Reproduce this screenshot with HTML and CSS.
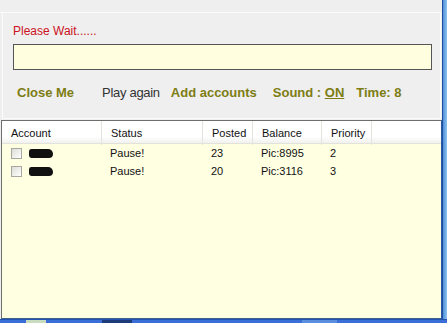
FILE: index.html
```html
<!DOCTYPE html>
<html lang="en">

<head>
  <meta charset="UTF-8">
  <title>Please Wait</title>
  <link rel="stylesheet" href="styles.css">
</head>

<body>
  <div id="screen">
    <div id="window">
      <div id="top-strip"></div>

      <div id="status-panel">
        <div id="wait-text">Please Wait......</div>
        <div id="wait-box"></div>
        <div id="actions">
          <span class="action olive close-me">Close Me</span>
          <span class="action play-again">Play again</span>
          <span class="action olive add-accounts">Add accounts</span>
          <span class="action olive sound">Sound : <u>ON</u></span>
          <span class="action olive time">Time: 8</span>
        </div>
      </div>

      <div id="accounts-list">
        <div class="list-row list-header">
          <div class="cell">Account</div>
          <div class="cell">Status</div>
          <div class="cell">Posted</div>
          <div class="cell">Balance</div>
          <div class="cell">Priority</div>
          <div class="cell"></div>
        </div>
        <div class="list-row">
          <div class="cell account-cell"><span class="check"></span><span class="scribble"></span></div>
          <div class="cell">Pause!</div>
          <div class="cell">23</div>
          <div class="cell">Pic:8995</div>
          <div class="cell">2</div>
        </div>
        <div class="list-row">
          <div class="cell account-cell"><span class="check"></span><span class="scribble"></span></div>
          <div class="cell">Pause!</div>
          <div class="cell">20</div>
          <div class="cell">Pic:3116</div>
          <div class="cell">3</div>
        </div>
      </div>
    </div>
    <div id="frame-right"></div>
  </div>
  <div id="taskbar">
    <span class="task task-light"></span>
    <span class="task task-dark"></span>
    <span class="task task-mid"></span>
  </div>
</body>

</html>
```

FILE: styles.css
```css
body {
  margin: 0;
  width: 447px;
  height: 323px;
  overflow: hidden;
  font-family: "Liberation Sans", Arial, sans-serif;
  background-color: #3a6fd8;
}

#screen {
  display: flex;
  height: 319px;
}

#window {
  width: 442px;
  display: flex;
  flex-direction: column;
  background-color: #efefef;
}

#frame-right {
  width: 5px;
  border-left: 1px solid #1f4f9e;
  background: linear-gradient(to right, #4f8fd8, #8fc2f0);
  box-sizing: border-box;
}

#top-strip {
  height: 12px;
  background-color: #efefef;
  border-bottom: 1px solid #fafafa;
}

/* top panel with the wait message */
#status-panel {
  margin-left: 2px;
  margin-right: 1px;
  border-left: 1px solid #fbfbfb;
  border-right: 1px solid #fbfbfb;
  border-bottom: 1px solid #fafafa;
  height: 106px;
  box-sizing: border-box;
  padding: 11px 0 0 10px;
  background-color: #efefef;
}

#wait-text {
  color: #cc1122;
  font-size: 12px;
  line-height: 14px;
}

#wait-box {
  margin-top: 6px;
  width: 419px;
  height: 26px;
  box-sizing: border-box;
  border: 1px solid #555555;
  background-color: #ffffe0;
}

#actions {
  display: flex;
  align-items: baseline;
  margin-top: 15px;
  font-size: 13px;
  line-height: 16px;
}

.olive {
  color: #7d7d14;
  font-weight: bold;
}

.close-me {
  margin-left: 4px;
}

.play-again {
  margin-left: 28px;
  color: #333333;
  letter-spacing: -0.3px;
}

.add-accounts {
  margin-left: 11px;
}

.sound {
  margin-left: 16px;
}

.time {
  margin-left: 12px;
}

/* list of accounts */
#accounts-list {
  flex: 1;
  margin: 1px 0 0 1px;
  border: 1px solid #6e6e6e;
  border-right-color: #2a5ba8;
  border-bottom-color: #3f5f8f;
  background-color: #ffffe2;
  font-size: 11px;
}

.list-row {
  display: grid;
  grid-template-columns: 100px 101px 50px 69px 50px 1fr;
  height: 18px;
  line-height: 18px;
}

.list-header {
  height: 22px;
  line-height: 24px;
  background: linear-gradient(#ffffff 70%, #f1f1ee);
  border-bottom: 1px solid #e2e2da;
  color: #222222;
}

.list-header .cell {
  padding-left: 9px;
  border-right: 1px solid #e4e4de;
}

.list-header .cell:last-child {
  border-right: none;
}

.cell {
  padding-left: 8px;
  white-space: nowrap;
  color: #111111;
}

.account-cell {
  display: flex;
  align-items: center;
  padding-left: 9px;
}

.check {
  width: 11px;
  height: 11px;
  border: 1px solid #a8a8a0;
  background: linear-gradient(135deg, #dcdcd6, #ffffff);
  box-sizing: border-box;
}

.scribble {
  margin-left: 7px;
  width: 24px;
  height: 9px;
  border-radius: 3px 6px 5px 3px;
  background-color: #111111;
  filter: blur(0.6px);
}

#taskbar {
  height: 4px;
  display: flex;
  background-color: #3a6fd8;
  border-top: 1px solid #2452b0;
}

.task {
  height: 4px;
}

.task-light {
  margin-left: 26px;
  width: 20px;
  background-color: #c9dcc0;
}

.task-dark {
  margin-left: 56px;
  width: 30px;
  background-color: #1c3b78;
}

.task-mid {
  margin-left: 170px;
  width: 35px;
  background-color: #5a8fe0;
}
```
